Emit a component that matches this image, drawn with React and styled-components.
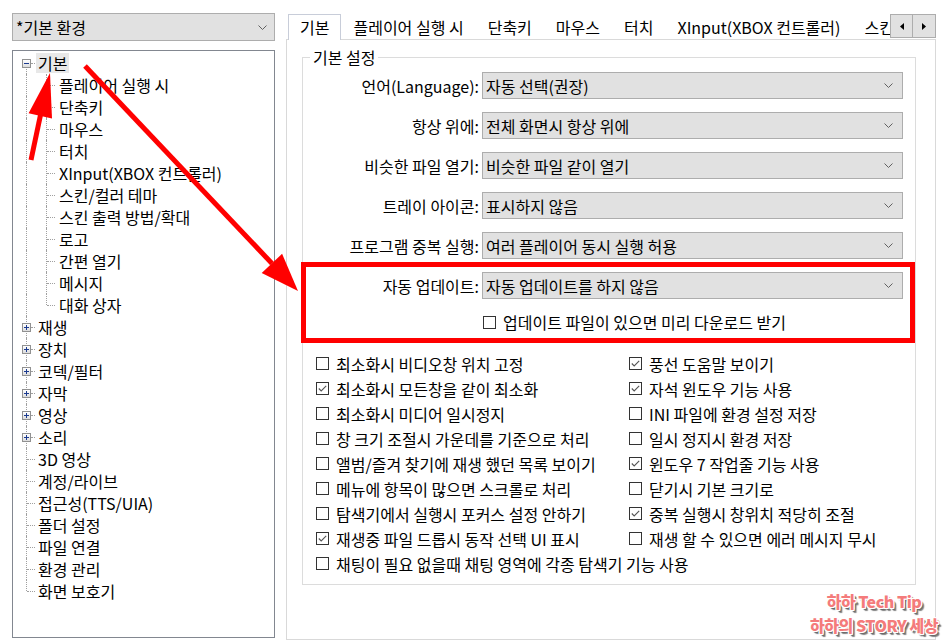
import React from 'react';
import styled, { createGlobalStyle, css } from 'styled-components';

const GlobalStyle = createGlobalStyle`
  html, body { margin: 0; padding: 0; background: #fff; }
  body {
    font-family: "Noto Sans CJK KR", "Noto Sans", sans-serif;
    font-size: 16px;
    color: #000;
  }
  * { box-sizing: border-box; }
`;

const Window = styled.div`
  position: relative;
  width: 946px;
  height: 643px;
  overflow: hidden;
  display: flex;
  gap: 11px;
  padding: 13px 0 0 12px;
  background: #fff;
`;

const LeftPane = styled.div`
  width: 263px;
  display: flex;
  flex-direction: column;
  gap: 9px;
`;

const ComboBox = styled.div`
  height: ${(p) => p.$h || 27}px;
  display: flex;
  align-items: center;
  justify-content: space-between;
  background: #e1e1e1;
  border: 1px solid #adadad;
  padding: 0 ${(p) => p.$pr || 9}px 0 3px;
  white-space: nowrap;
  line-height: 20px;
`;

const Chevron = () => (
  <svg width="9" height="5" viewBox="0 0 9 5">
    <polyline points="0.5,0.5 4.5,4.5 8.5,0.5" fill="none" stroke="#606060" strokeWidth="1" />
  </svg>
);

const Combo = ({ children, h, pr }) => (
  <ComboBox $h={h} $pr={pr}>
    <span>{children}</span>
    <Chevron />
  </ComboBox>
);

const TreeBox = styled.div`
  height: 588px;
  border: 1px solid #828790;
  background: #fff;
  padding-top: 1px;
`;

const TreeRow = styled.div`
  position: relative;
  height: 22px;
  display: flex;
  align-items: center;
  padding-left: ${(p) => (p.$level ? 44 : 23)}px;
  white-space: nowrap;
`;

const VLine = styled.span`
  position: absolute;
  left: ${(p) => p.$x}px;
  top: ${(p) => (p.$fromMid ? '11px' : '0')};
  bottom: ${(p) => (p.$toMid ? '11px' : '0')};
  border-left: 1px dotted #a0a0a0;
`;

const HLine = styled.span`
  position: absolute;
  left: ${(p) => p.$x}px;
  width: ${(p) => p.$w}px;
  top: 11px;
  border-top: 1px dotted #a0a0a0;
`;

const Expander = styled.span`
  position: absolute;
  left: 9px;
  top: 7px;
  width: 9px;
  height: 9px;
  border: 1px solid #919191;
  background: linear-gradient(#ffffff, #dcdcdc);
  &::before {
    content: '';
    position: absolute;
    left: 1px;
    top: 3px;
    width: 5px;
    height: 1px;
    background: #1c3b8f;
  }
  ${(p) =>
    p.$plus &&
    css`
      &::after {
        content: '';
        position: absolute;
        left: 3px;
        top: 1px;
        width: 1px;
        height: 5px;
        background: #1c3b8f;
      }
    `}
`;

const TreeLabel = styled.span`
  line-height: 20px;
  padding: 0 2px;
  background: ${(p) => (p.$selected ? '#e8e8e8' : 'transparent')};
`;

const treeItems = [
  { t: '기본', exp: '-', sel: true },
  { t: '플레이어 실행 시', l: 1 },
  { t: '단축키', l: 1 },
  { t: '마우스', l: 1 },
  { t: '터치', l: 1 },
  { t: 'XInput(XBOX 컨트롤러)', l: 1 },
  { t: '스킨/컬러 테마', l: 1 },
  { t: '스킨 출력 방법/확대', l: 1 },
  { t: '로고', l: 1 },
  { t: '간편 열기', l: 1 },
  { t: '메시지', l: 1 },
  { t: '대화 상자', l: 1, last: true },
  { t: '재생', exp: '+' },
  { t: '장치', exp: '+' },
  { t: '코덱/필터', exp: '+' },
  { t: '자막', exp: '+' },
  { t: '영상', exp: '+' },
  { t: '소리', exp: '+' },
  { t: '3D 영상' },
  { t: '계정/라이브' },
  { t: '접근성(TTS/UIA)' },
  { t: '폴더 설정' },
  { t: '파일 연결' },
  { t: '환경 관리' },
  { t: '화면 보호기', rootLast: true },
];

const Tree = () => (
  <TreeBox>
    {treeItems.map((it, i) => (
      <TreeRow key={i} $level={it.l}>
        {it.l ? (
          <>
            <VLine $x={13} />
            <VLine $x={33} $toMid={it.last} />
            <HLine $x={34} $w={8} />
          </>
        ) : (
          <>
            <VLine $x={13} $fromMid={i === 0} $toMid={it.rootLast} />
            <HLine $x={it.exp ? 18 : 14} $w={it.exp ? 4 : 8} />
            {it.exp && <Expander $plus={it.exp === '+'} />}
          </>
        )}
        <TreeLabel $selected={it.sel}>{it.t}</TreeLabel>
      </TreeRow>
    ))}
  </TreeBox>
);

const RightPane = styled.div`
  width: 650px;
  display: flex;
  flex-direction: column;
`;

const TabBar = styled.div`
  height: 27px;
  display: flex;
  margin-bottom: -1px;
  position: relative;
  z-index: 1;
`;

const TabScroller = styled.div`
  flex: 1;
  min-width: 0;
  overflow: hidden;
  display: flex;
  align-items: flex-end;
  padding-left: 2px;
`;

const Tab = styled.div`
  flex: none;
  height: 26px;
  padding: 0 11px;
  line-height: 24px;
  white-space: nowrap;
  border: 1px solid transparent;
  border-bottom: none;
  ${(p) =>
    p.$active &&
    css`
      background: #fff;
      border-color: #c8cdd9;
    `}
`;

const ScrollButtons = styled.div`
  display: flex;
  margin-top: 1px;
  height: 24px;
`;

const ScrollBtn = styled.div`
  width: 23px;
  height: 24px;
  background: #e1e1e1;
  border: 1px solid #adadad;
  & + & { margin-left: -1px; width: 24px; }
  display: flex;
  align-items: center;
  justify-content: center;
`;

const Arrow = ({ dir }) => (
  <svg width="4" height="7" viewBox="0 0 4 7">
    {dir === 'left' ? <polygon points="4,0 0,3.5 4,7" fill="#000" /> : <polygon points="0,0 4,3.5 0,7" fill="#000" />}
  </svg>
);

const Page = styled.div`
  height: 601px;
  border: 1px solid #d9d9d9;
  background: #fff;
  padding: 17px 19px 0 15px;
`;

const GroupBox = styled.div`
  position: relative;
  height: 528px;
  border: 1px solid #dcdcdc;
  padding: 14px 12px 0 0;
`;

const Legend = styled.span`
  position: absolute;
  top: -11px;
  left: 7px;
  padding: 0 3px;
  background: #fff;
  line-height: 20px;
`;

const FormRows = styled.div`
  display: flex;
  flex-direction: column;
  gap: 13px;
`;

const FormRow = styled.div`
  display: grid;
  grid-template-columns: ${(p) => p.$label || 176}px 421px;
  column-gap: 3px;
  align-items: center;
  height: 27px;
`;

const Label = styled.span`
  text-align: right;
  white-space: nowrap;
`;

const Highlight = styled.div`
  margin: 3px -12px 0 -2px;
  border: 5px solid #ff0000;
  padding: 5px 7px 6px 0;
`;

const CheckRowSingle = styled.div`
  margin-top: 13px;
  height: 20px;
  padding-left: 177px;
  display: flex;
  align-items: center;
`;

const CheckGrid = styled.div`
  margin-top: 8px;
  padding-left: 13px;
  display: grid;
  grid-template-columns: 313px 1fr;
  grid-auto-rows: 25px;
`;

const CheckItem = styled.label`
  display: flex;
  align-items: center;
  gap: 7px;
  white-space: nowrap;
  ${(p) => p.$wide && css`grid-column: 1 / -1;`}
`;

const Box = styled.span`
  flex: none;
  width: 13px;
  height: 13px;
  border: 1px solid #333;
  background: #fff;
  display: flex;
`;

const Check = ({ checked, children, wide }) => (
  <CheckItem $wide={wide}>
    <Box>
      {checked && (
        <svg width="11" height="11" viewBox="0 0 11 11">
          <polyline points="1.8,5.5 4.2,8 9.2,2.8" fill="none" stroke="#555" strokeWidth="1.1" />
        </svg>
      )}
    </Box>
    <span>{children}</span>
  </CheckItem>
);

const Overlay = styled.svg`
  position: absolute;
  left: 0;
  top: 0;
  pointer-events: none;
  z-index: 10;
`;

const Watermark = styled.div`
  position: absolute;
  left: 794px;
  top: 589px;
  width: 160px;
  text-align: center;
  z-index: 11;
  font-weight: 900;
  font-size: 16px;
  line-height: 24px;
  color: #f47b7b;
  letter-spacing: -0.5px;
  text-shadow:
    1px 0 0 #fff, -1px 0 0 #fff, 0 1px 0 #fff, 0 -1px 0 #fff,
    1px 1px 0 #fff, -1px -1px 0 #fff, 1px -1px 0 #fff, -1px 1px 0 #fff,
    2px 2px 1px #666, 3px 3px 1px #888;
`;

const forms = [
  ['언어(Language):', '자동 선택(권장)'],
  ['항상 위에:', '전체 화면시 항상 위에'],
  ['비슷한 파일 열기:', '비슷한 파일 같이 열기'],
  ['트레이 아이콘:', '표시하지 않음'],
  ['프로그램 중복 실행:', '여러 플레이어 동시 실행 허용'],
];

const checks = [
  ['최소화시 비디오창 위치 고정', false],
  ['풍선 도움말 보이기', true],
  ['최소화시 모든창을 같이 최소화', true],
  ['자석 윈도우 기능 사용', true],
  ['최소화시 미디어 일시정지', false],
  ['INI 파일에 환경 설정 저장', false],
  ['창 크기 조절시 가운데를 기준으로 처리', false],
  ['일시 정지시 환경 저장', false],
  ['앨범/즐겨 찾기에 재생 했던 목록 보이기', false],
  ['윈도우 7 작업줄 기능 사용', true],
  ['메뉴에 항목이 많으면 스크롤로 처리', false],
  ['닫기시 기본 크기로', false],
  ['탐색기에서 실행시 포커스 설정 안하기', false],
  ['중복 실행시 창위치 적당히 조절', true],
  ['재생중 파일 드롭시 동작 선택 UI 표시', true],
  ['재생 할 수 있으면 에러 메시지 무시', false],
];

const tabs = ['기본', '플레이어 실행 시', '단축키', '마우스', '터치', 'XInput(XBOX 컨트롤러)', '스킨/컬러 테마'];

export default function App() {
  return (
    <>
      <GlobalStyle />
      <Window>
        <LeftPane>
          <Combo h={28} pr={7}>*기본 환경</Combo>
          <Tree />
        </LeftPane>
        <RightPane>
          <TabBar>
            <TabScroller>
              {tabs.map((t, i) => (
                <Tab key={t} $active={i === 0}>{t}</Tab>
              ))}
            </TabScroller>
            <ScrollButtons>
              <ScrollBtn><Arrow dir="left" /></ScrollBtn>
              <ScrollBtn><Arrow dir="right" /></ScrollBtn>
            </ScrollButtons>
          </TabBar>
          <Page>
            <GroupBox>
              <Legend>기본 설정</Legend>
              <FormRows>
                {forms.map(([l, v]) => (
                  <FormRow key={l}>
                    <Label>{l}</Label>
                    <Combo>{v}</Combo>
                  </FormRow>
                ))}
              </FormRows>
              <Highlight>
                <FormRow $label={173}>
                  <Label>자동 업데이트:</Label>
                  <Combo>자동 업데이트를 하지 않음</Combo>
                </FormRow>
                <CheckRowSingle>
                  <Check>업데이트 파일이 있으면 미리 다운로드 받기</Check>
                </CheckRowSingle>
              </Highlight>
              <CheckGrid>
                {checks.map(([t, c]) => (
                  <Check key={t} checked={c}>{t}</Check>
                ))}
                <Check wide>채팅이 필요 없을때 채팅 영역에 각종 탐색기 기능 사용</Check>
              </CheckGrid>
            </GroupBox>
          </Page>
        </RightPane>
        <Overlay width="946" height="643" viewBox="0 0 946 643">
          <line x1="31" y1="160" x2="40.5" y2="115" stroke="#ff0000" strokeWidth="5" />
          <polygon points="50,73 52,118.5 28.6,113.3" fill="#ff0000" />
          <line x1="85" y1="66" x2="272" y2="263.5" stroke="#ff0000" strokeWidth="5" />
          <polygon points="298,291 261.7,273 282.1,253.8" fill="#ff0000" />
        </Overlay>
        <Watermark>
          하하 Tech Tip
          <br />
          하하의 STORY 세상
        </Watermark>
      </Window>
    </>
  );
}
